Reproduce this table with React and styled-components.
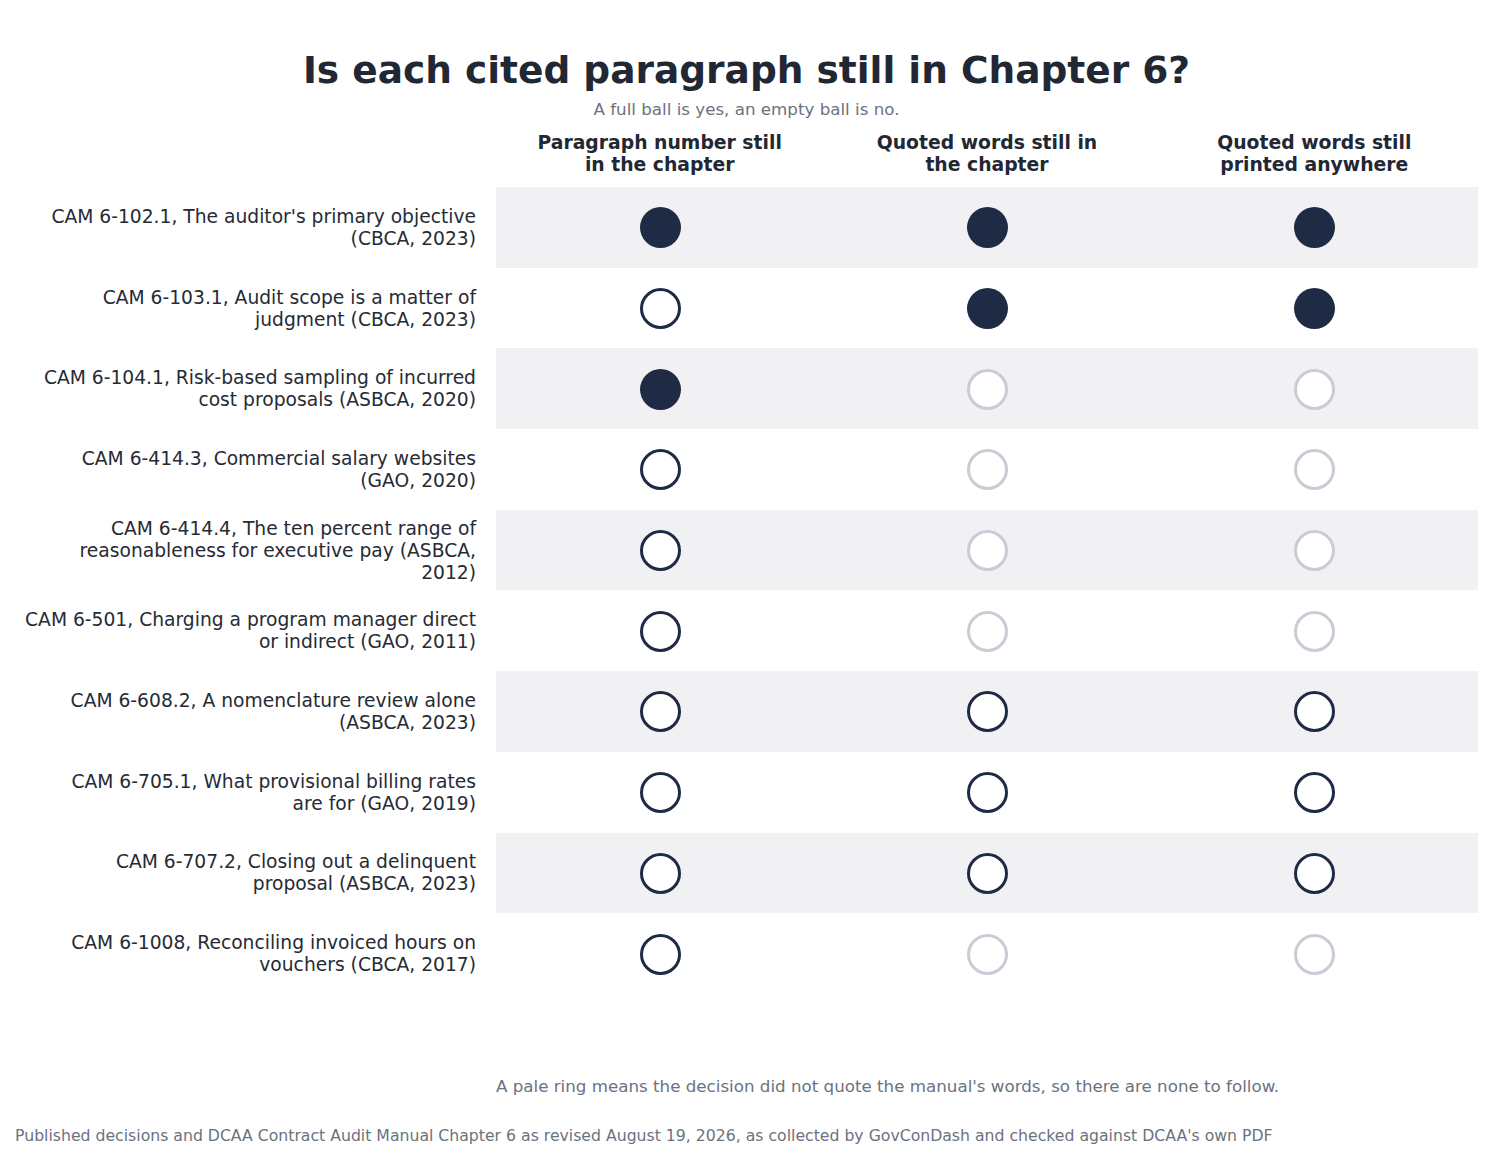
import React from 'react'
import styled, { createGlobalStyle } from 'styled-components'

const GlobalStyle = createGlobalStyle`
  body {
    margin: 0;
    background: #ffffff;
    font-family: "DejaVu Sans", "Liberation Sans", sans-serif;
  }
`

const columns = [
  ['Paragraph number still', 'in the chapter'],
  ['Quoted words still in', 'the chapter'],
  ['Quoted words still', 'printed anywhere'],
]

// full = yes, empty = no, pale = nothing was quoted
const rows = [
  { label: ["CAM 6-102.1, The auditor's primary objective", '(CBCA, 2023)'], marks: ['full', 'full', 'full'] },
  { label: ['CAM 6-103.1, Audit scope is a matter of', 'judgment (CBCA, 2023)'], marks: ['empty', 'full', 'full'] },
  { label: ['CAM 6-104.1, Risk-based sampling of incurred', 'cost proposals (ASBCA, 2020)'], marks: ['full', 'pale', 'pale'] },
  { label: ['CAM 6-414.3, Commercial salary websites', '(GAO, 2020)'], marks: ['empty', 'pale', 'pale'] },
  { label: ['CAM 6-414.4, The ten percent range of', 'reasonableness for executive pay (ASBCA,', '2012)'], marks: ['empty', 'pale', 'pale'] },
  { label: ['CAM 6-501, Charging a program manager direct', 'or indirect (GAO, 2011)'], marks: ['empty', 'pale', 'pale'] },
  { label: ['CAM 6-608.2, A nomenclature review alone', '(ASBCA, 2023)'], marks: ['empty', 'empty', 'empty'] },
  { label: ['CAM 6-705.1, What provisional billing rates', 'are for (GAO, 2019)'], marks: ['empty', 'empty', 'empty'] },
  { label: ['CAM 6-707.2, Closing out a delinquent', 'proposal (ASBCA, 2023)'], marks: ['empty', 'empty', 'empty'] },
  { label: ['CAM 6-1008, Reconciling invoiced hours on', 'vouchers (CBCA, 2017)'], marks: ['empty', 'pale', 'pale'] },
]

export default function App() {
  return (
    <Page>
      <GlobalStyle />
      <Title>Is each cited paragraph still in Chapter 6?</Title>
      <Subtitle>A full ball is yes, an empty ball is no.</Subtitle>

      <HeaderRow>
        <Spacer />
        <HeaderCells>
          {columns.map((lines, i) => (
            <HeaderCell key={i}>
              {lines.map((l, j) => <div key={j}>{l}</div>)}
            </HeaderCell>
          ))}
        </HeaderCells>
      </HeaderRow>

      <Table>
        {rows.map((row, i) => (
          <Row key={i}>
            <Label>
              {row.label.map((l, j) => <div key={j}>{l}</div>)}
            </Label>
            <Band $shaded={i % 2 === 0}>
              {row.marks.map((m, j) => (
                <Cell key={j}>
                  <Ball $kind={m} />
                </Cell>
              ))}
            </Band>
          </Row>
        ))}
      </Table>

      <Note>A pale ring means the decision did not quote the manual's words, so there are none to follow.</Note>
      <Source>
        Published decisions and DCAA Contract Audit Manual Chapter 6 as revised August 19, 2026, as collected by GovConDash and checked against DCAA's own PDF
      </Source>
    </Page>
  )
}

const Page = styled.div`
  width: 1492px;
  height: 1159px;
  box-sizing: border-box;
  padding: 48px 14px 0 15px;
  color: #1f2530;
`

const Title = styled.h1`
  margin: 0;
  text-align: center;
  font-size: 37.5px;
  line-height: 44px;
  font-weight: 700;
  color: #222833;
`

const Subtitle = styled.div`
  margin-top: 7px;
  text-align: center;
  font-size: 16.7px;
  line-height: 20px;
  color: #6b7280;
`

const HeaderRow = styled.div`
  margin-top: 13px;
  display: grid;
  grid-template-columns: 481px 982px;
`

const Spacer = styled.div``

const HeaderCells = styled.div`
  display: grid;
  grid-template-columns: repeat(3, 1fr);
`

const HeaderCell = styled.div`
  text-align: center;
  font-size: 18.8px;
  line-height: 22px;
  font-weight: 700;
  color: #222833;
`

const Table = styled.div`
  margin-top: 11px;
  display: flex;
  flex-direction: column;
`

const Row = styled.div`
  display: grid;
  grid-template-columns: 481px 982px;
  height: 80.7px;
`

const Label = styled.div`
  padding-right: 20px;
  padding-top: 1px;
  display: flex;
  flex-direction: column;
  justify-content: center;
  align-items: flex-end;
  text-align: right;
  white-space: nowrap;
  font-size: 18.7px;
  line-height: 22px;
  color: #262b35;
`

const Band = styled.div`
  display: grid;
  grid-template-columns: repeat(3, 1fr);
  background: ${p => (p.$shaded ? '#f1f1f3' : '#ffffff')};
`

const Cell = styled.div`
  display: flex;
  align-items: center;
  justify-content: center;
  padding-left: 1px;
  padding-top: 1px;
`

const Ball = styled.div`
  width: 41px;
  height: 41px;
  box-sizing: border-box;
  border-radius: 50%;
  background: ${p => (p.$kind === 'full' ? '#1f2a44' : '#ffffff')};
  border: ${p =>
    p.$kind === 'full'
      ? 'none'
      : p.$kind === 'pale'
      ? '3px solid #c8cdd5'
      : '3px solid #1f2a44'};
`

const Note = styled.div`
  margin-top: 82px;
  margin-left: 481px;
  font-size: 16.7px;
  line-height: 20px;
  color: #6b7280;
`

const Source = styled.div`
  margin-top: 30px;
  font-size: 15.7px;
  line-height: 20px;
  color: #6b7280;
`
